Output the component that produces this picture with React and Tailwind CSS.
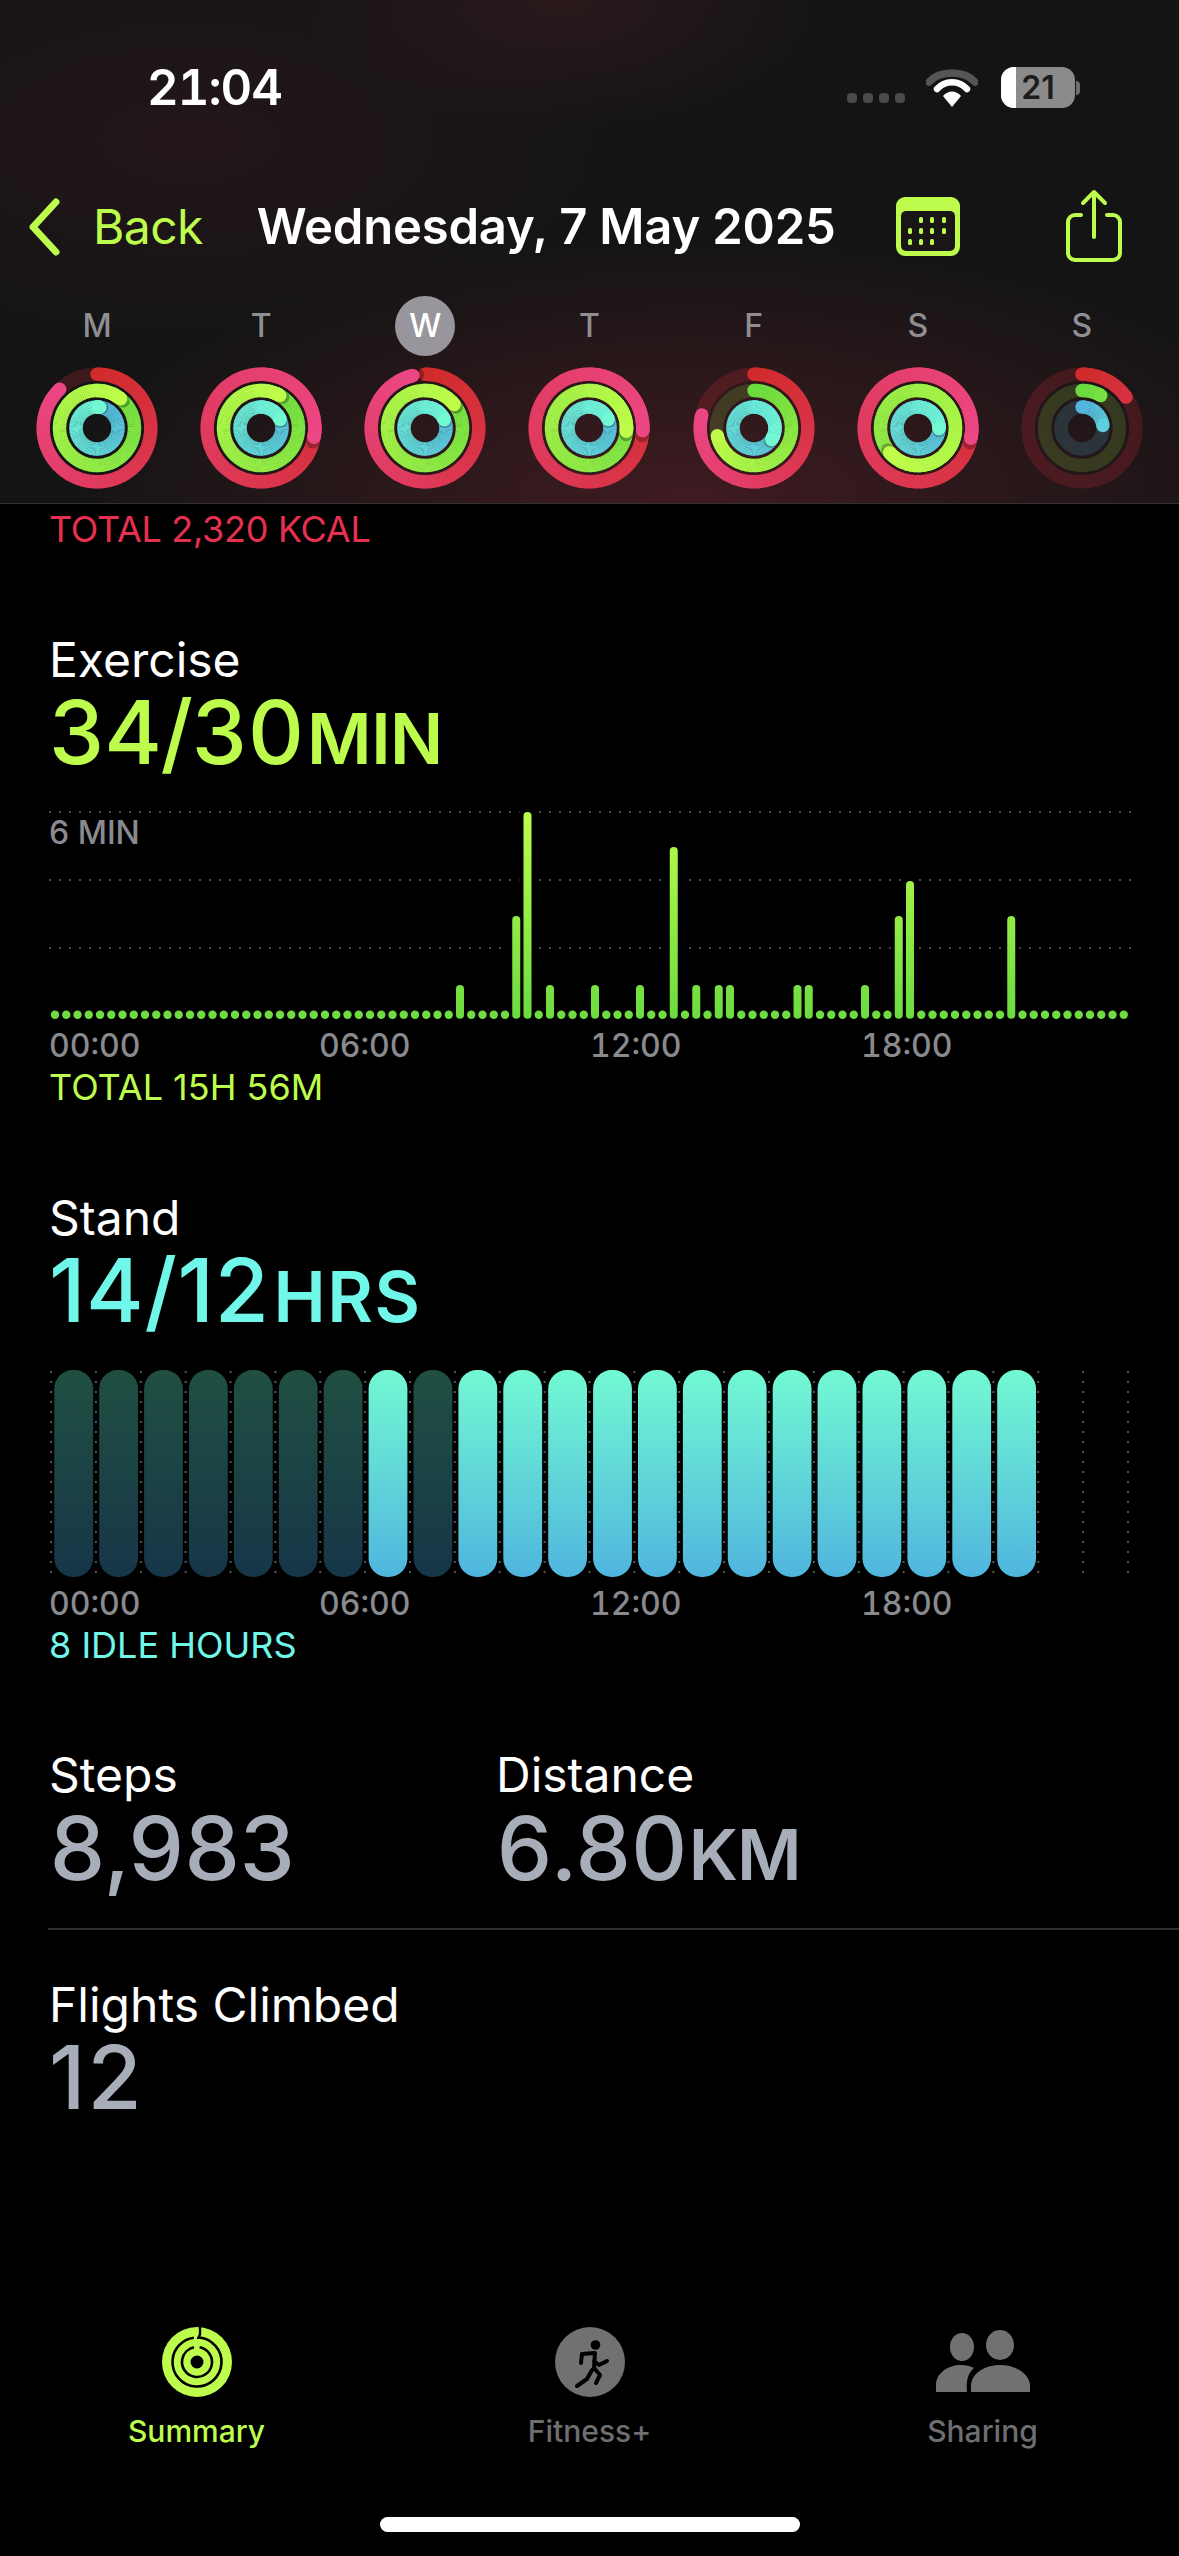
import React from "react";

const lerp = (a, b, t) => a + (b - a) * t;
const hex = (h) => [1, 3, 5].map((i) => parseInt(h.slice(i, i + 2), 16));
const mix = (a, b, t) => {
  const A = hex(a), B = hex(b);
  return `rgb(${A.map((v, i) => Math.round(lerp(v, B[i], t))).join(",")})`;
};
const pt = (r, deg) => {
  const a = ((deg - 90) * Math.PI) / 180;
  return [r * Math.cos(a), r * Math.sin(a)];
};

function Band({ r, total, from, to, track, sw = 13.4 }) {
  const step = 3;
  const span = Math.max(total, 220);
  const seg = (a) => {
    const [x1, y1] = pt(r, a);
    const [x2, y2] = pt(r, Math.min(a + step + 0.6, total));
    return <path key={a} d={`M${x1} ${y1}A${r} ${r} 0 0 1 ${x2} ${y2}`} stroke={mix(from, to, a / span)} strokeWidth={sw} fill="none" />;
  };
  const segs = [];
  for (let a = 0; a < total; a += step) segs.push(seg(a));
  const tail = [];
  for (let a = Math.max(total - 12, 0); a < total; a += step) tail.push(seg(a));
  const [sx, sy] = pt(r, 0);
  const [ex, ey] = pt(r, total);
  const [shx, shy] = pt(r, total + 5);
  return (
    <g>
      <circle r={r} fill="none" stroke={track} strokeWidth={sw} />
      <circle cx={sx} cy={sy} r={sw / 2} fill={from} />
      {segs}
      {total >= 345 && <circle cx={shx} cy={shy} r={sw / 2} fill="#000" opacity="0.28" />}
      {total >= 345 && tail}
      <circle cx={ex} cy={ey} r={sw / 2} fill={mix(from, to, total / span)} />
    </g>
  );
}

function Rings({ o, m, i }) {
  return (
    <svg width="124" height="124" viewBox="-62 -62 124 124" className="block">
      <Band r={53.8} total={o} from="#d12b2b" to="#ec4785" track="rgba(225,45,60,0.2)" />
      <Band r={37.5} total={m} from="#6bdc40" to="#c0fd4b" track="rgba(160,240,70,0.17)" />
      <Band r={21} total={i} from="#52b6de" to="#72f9d3" track="rgba(90,200,230,0.17)" />
    </svg>
  );
}

const days = [
  { l: "M", o: 316, m: 399, i: 368 },
  { l: "T", o: 460, m: 390, i: 426 },
  { l: "W", o: 347, m: 411, i: 427, sel: true },
  { l: "T", o: 453, m: 455, i: 426 },
  { l: "F", o: 284, m: 258, i: 483 },
  { l: "S", o: 461, m: 589, i: 452 },
  { l: "S", o: 55, m: 30, i: 83 },
];

function StatusBar() {
  return (
    <div className="flex h-[174px] items-start justify-between pl-[147px] pr-[99px] pt-[57px]">
      <span className="text-[49px] font-semibold leading-[62px] text-white tracking-[-1px] tabular-nums">21:04</span>
      <div className="flex items-end gap-[21px] pt-[10px]">
        <div className="mb-[5px] flex gap-[6px]">
          {[0, 1, 2, 3].map((k) => (
            <span key={k} className="h-[10px] w-[10px] rounded-[4px] bg-[#4a4a4a]" />
          ))}
        </div>
        <svg width="52" height="38" viewBox="0 0 52 38" className="mb-[1px]">
          <path d="M3 13C14 1 38 1 49 13" stroke="#555" strokeWidth="7.5" fill="none" strokeLinecap="round" />
          <path d="M11 20C19 11 33 11 41 20" stroke="#fff" strokeWidth="6.5" fill="none" strokeLinecap="round" />
          <path d="M26 38L17 27C22 21 30 21 35 27Z" fill="#fff" />
        </svg>
        <div className="ml-[2px] flex items-center">
          <div className="relative flex h-[41px] w-[74px] items-center justify-center overflow-hidden rounded-[13px] bg-[#8b8b8b]">
            <span className="absolute inset-y-0 left-0 w-[15px] bg-white" />
            <span className="relative text-[32px] font-semibold leading-none text-[#1c1c1c]">21</span>
          </div>
          <span className="ml-[1px] h-[14px] w-[4px] rounded-r-full bg-[#6f6f6f]" />
        </div>
      </div>
    </div>
  );
}

function NavBar() {
  const dots = [
    [921, 0], [932, 0], [944, 0],
    [910, 1], [921, 1], [932, 1], [944, 1],
    [910, 2], [921, 2], [932, 2],
  ];
  return (
    <div className="relative flex h-[104px] items-start">
      <svg width="36" height="60" viewBox="0 0 36 60" className="ml-[26px] mt-[23px]">
        <path d="M30 5L7 30L30 55" stroke="#bdfc4c" strokeWidth="7" fill="none" strokeLinecap="round" strokeLinejoin="round" />
      </svg>
      <span className="ml-[31px] mt-[24px] text-[48px] leading-[58px] text-[#bdfc4c] tracking-[-0.6px]">Back</span>
      <span className="ml-[54px] mt-[24px] text-[49px] font-semibold leading-[58px] text-white tracking-[-0.2px] whitespace-nowrap">Wednesday, 7 May 2025</span>
      <svg width="66" height="62" viewBox="0 0 66 62" className="absolute left-[895px] top-[22px]">
        <rect x="1" y="1" width="64" height="59" rx="9" fill="#bdfc4c" />
        <rect x="6" y="15" width="54" height="40" rx="5" fill="#1a1516" />
        {dots.map(([x, r], k) => (
          <rect key={k} x={x - 895 - 2} y={21 + r * 11} width="4" height="6" rx="1.5" fill="#bdfc4c" />
        ))}
      </svg>
      <svg width="60" height="74" viewBox="0 0 60 74" className="absolute left-[1064px] top-[15px]">
        <path d="M17 26H11a7 7 0 0 0-7 7v31a7 7 0 0 0 7 7h38a7 7 0 0 0 7-7V33a7 7 0 0 0-7-7h-6" stroke="#bdfc4c" strokeWidth="4" fill="none" strokeLinecap="round" />
        <path d="M30 48V3M19 14L30 3L41 14" stroke="#bdfc4c" strokeWidth="4" fill="none" strokeLinecap="round" strokeLinejoin="round" />
      </svg>
    </div>
  );
}

function WeekRow() {
  return (
    <div className="grid grid-cols-7 px-[15px] pt-[18px]">
      {days.map((d, k) => (
        <div key={k} className="flex flex-col items-center">
          <span className={`flex h-[60px] w-[60px] items-center justify-center rounded-full text-[32px] font-medium leading-none ${d.sel ? "bg-[#98969c] text-white" : "text-[#8e8e93]"}`}>{d.l}</span>
          <div className="mt-[10px]">
            <Rings o={d.o} m={d.m} i={d.i} />
          </div>
        </div>
      ))}
    </div>
  );
}

const barTops = { 36: 985, 41: 916, 42: 812, 44: 985, 48: 985, 52: 985, 55: 847, 57: 985, 59: 985, 60: 985, 66: 985, 67: 985, 72: 985, 75: 916, 76: 881, 85: 916 };

function ExerciseChart() {
  const Y0 = 802;
  const cols = Array.from({ length: 96 }, (_, k) => k);
  const gx = Array.from({ length: 109 }, (_, k) => 49 + k * 10);
  return (
    <svg width="1179" height="226" viewBox={`0 ${Y0} 1179 226`} className="block">
      <defs>
        <linearGradient id="ex" gradientUnits="userSpaceOnUse" x1="0" y1="812" x2="0" y2="1018">
          <stop offset="0" stopColor="#bdfc4c" />
          <stop offset="1" stopColor="#6bdc40" />
        </linearGradient>
      </defs>
      {[812, 880, 948].map((y) =>
        gx.map((x) => <rect key={`${y}-${x}`} x={x} y={y - 1} width="2" height="2" fill="#4c4c4c" />)
      )}
      {cols.map((k) =>
        barTops[k] ? <rect key={k} x={55 + k * 11.25 - 8} y={barTops[k] - 2} width="16" height={1018.7 - barTops[k] + 2} fill="#000" /> : null
      )}
      {cols.map((k) => {
        const x = 55 + k * 11.25;
        const top = barTops[k];
        if (top) return <rect key={k} x={x - 4} y={top} width="8" height={1018.7 - top} rx="4" fill="url(#ex)" />;
        return <circle key={k} cx={x} cy={1014.7} r="4.2" fill="#6fdc42" />;
      })}
    </svg>
  );
}

function StandChart() {
  const cols = Array.from({ length: 25 }, (_, k) => 51 + k * 44.875);
  const ys = Array.from({ length: 21 }, (_, k) => 1 + k * 10);
  return (
    <svg width="1179" height="208" viewBox="0 0 1179 208" className="block">
      <defs>
        <linearGradient id="st" x1="0" y1="0" x2="0" y2="1">
          <stop offset="0" stopColor="#72f9d3" />
          <stop offset="1" stopColor="#50b5de" />
        </linearGradient>
        <linearGradient id="sd" x1="0" y1="0" x2="0" y2="1">
          <stop offset="0" stopColor="#204f42" />
          <stop offset="1" stopColor="#163648" />
        </linearGradient>
      </defs>
      {cols.map((x) => ys.map((y) => <rect key={`${x}-${y}`} x={x - 1} y={y} width="2" height="2" fill="#565656" />))}
      {Array.from({ length: 22 }, (_, k) => (
        <rect key={k} x={54.3 + k * 44.9} y="0" width="38.8" height="207" rx="18.5" fill={k < 7 || k === 8 ? "url(#sd)" : "url(#st)"} />
      ))}
    </svg>
  );
}

function TimeAxis() {
  return (
    <div className="relative h-[30px] text-[32px] font-medium leading-[30px] text-[#8a8a8e] tabular-nums">
      <span className="absolute left-[49px]">00:00</span>
      <span className="absolute left-[319px]">06:00</span>
      <span className="absolute left-[590px]">12:00</span>
      <span className="absolute left-[861px]">18:00</span>
    </div>
  );
}

function Tab({ label, active, children }) {
  return (
    <div className="flex w-[393px] flex-col items-center">
      <div className="flex h-[70px] items-center justify-center">{children}</div>
      <span className={`mt-[16px] text-[30px] font-medium leading-[36px] ${active ? "text-[#bdfc4c]" : "text-[#6e6e70]"}`}>{label}</span>
    </div>
  );
}

export default function App() {
  return (
    <div className="flex h-[2556px] w-[1179px] flex-col overflow-hidden bg-black font-['Inter',sans-serif]">
      <header className="h-[504px] shrink-0 border-b border-[#343033] bg-[#151415] bg-[radial-gradient(ellipse_260px_130px_at_560px_0px,#2a191c,transparent),radial-gradient(ellipse_420px_200px_at_190px_140px,#231619,transparent),radial-gradient(ellipse_620px_260px_at_690px_500px,#3f1b20,transparent)]">
        <StatusBar />
        <NavBar />
        <WeekRow />
      </header>

      <div className="px-[49px] pt-[3px] text-[36px] leading-[44px] text-[#e5304f] tracking-[-0.3px]">TOTAL 2,320 KCAL</div>

      <section className="mt-[80px]">
        <div className="px-[49px] text-[48px] leading-[57px] text-white">Exercise</div>
        <div className="px-[49px] text-[88px] font-medium leading-[88px] text-[#bdfc4c] tabular-nums tracking-[-1.3px] whitespace-nowrap">
          34/30<span className="ml-[4px] text-[70px] font-semibold leading-none tracking-[-0.5px]">MIN</span>
        </div>
        <div className="relative mt-[26px]">
          <ExerciseChart />
          <span className="absolute left-[49px] top-[15px] text-[32px] font-medium leading-[32px] text-[#8a8a8e]">6 MIN</span>
        </div>
        <div className="mt-[3px]"><TimeAxis /></div>
        <div className="mt-[7px] px-[49px] text-[36px] leading-[38px] text-[#bdfc4c]">TOTAL 15H 56M</div>
      </section>

      <section className="mt-[83px]">
        <div className="px-[49px] text-[48px] leading-[57px] text-white">Stand</div>
        <div className="px-[49px] text-[88px] font-medium leading-[88px] text-[#71f7e9] tracking-[0.6px] whitespace-nowrap">
          14/12<span className="ml-[4px] text-[70px] font-semibold leading-none tracking-[1.5px]">HRS</span>
        </div>
        <div className="mt-[36px]"><StandChart /></div>
        <div className="mt-[11px]"><TimeAxis /></div>
        <div className="mt-[7px] px-[49px] text-[36px] leading-[38px] text-[#71f7e9]">8 IDLE HOURS</div>
      </section>

      <section className="mt-[82px] flex px-[49px]">
        <div className="w-[447px]">
          <div className="text-[48px] leading-[57px] text-white">Steps</div>
          <div className="mt-px text-[88px] font-medium leading-[88px] text-[#a8adba] tabular-nums tracking-[-1px]">8,983</div>
        </div>
        <div>
          <div className="text-[48px] leading-[57px] text-white">Distance</div>
          <div className="mt-px text-[88px] font-medium leading-[88px] text-[#a8adba] tabular-nums tracking-[-1px] whitespace-nowrap">6.80<span className="ml-[2px] text-[70px] font-semibold leading-none">KM</span></div>
        </div>
      </section>
      <div className="ml-[48px] mt-[36px] h-[2px] shrink-0 bg-[#2e2e2e]" />
      <section className="mt-[46px] px-[49px]">
        <div className="text-[48px] leading-[57px] text-white">Flights Climbed</div>
        <div className="text-[88px] font-medium leading-[88px] text-[#a8adba] tracking-[2px]">12</div>
      </section>

      <nav className="mt-auto flex pb-[68px]">
        <Tab label="Summary" active>
          <svg width="70" height="70" viewBox="-35 -35 70 70">
            <circle r="35" fill="#bdfc4c" />
            <circle r="24.5" fill="none" stroke="#000" strokeWidth="2.6" strokeDasharray="148 6" transform="rotate(-86)" />
            <circle r="15" fill="none" stroke="#000" strokeWidth="2.6" strokeDasharray="88 6" transform="rotate(-80)" />
            <circle r="6.5" fill="#000" />
            <path d="M3 -35V-28C3 -26 1 -25 1 -23" stroke="#000" strokeWidth="2.4" fill="none" />
          </svg>
        </Tab>
        <Tab label="Fitness+">
          <svg width="70" height="70" viewBox="-35 -35 70 70">
            <circle r="35" fill="#717171" />
            <circle cx="5.5" cy="-17" r="4.8" fill="#000" />
            <path d="M-8 -8L-9 1M-8 -8L5 -9L4 6L10 13L6 21M4 -1L9 3L17 -1M2 8L-3 17L-13 24" stroke="#000" strokeWidth="4" fill="none" strokeLinecap="round" strokeLinejoin="round" />
          </svg>
        </Tab>
        <Tab label="Sharing">
          <svg width="96" height="64" viewBox="0 0 96 64">
            <ellipse cx="27" cy="17" rx="12" ry="14" fill="#717171" />
            <ellipse cx="65" cy="15" rx="14" ry="15" fill="#717171" />
            <path d="M1 62V55C1 43 13 35 26 35C31 35 35 36 39 38C33 43 31 50 32 62Z" fill="#717171" />
            <path d="M36 62V56C36 44 49 35 65 35C81 35 95 44 95 56V62Z" fill="#717171" />
          </svg>
        </Tab>
      </nav>
      <div className="mx-auto mb-[24px] h-[15px] w-[420px] shrink-0 rounded-full bg-white" />
    </div>
  );
}
